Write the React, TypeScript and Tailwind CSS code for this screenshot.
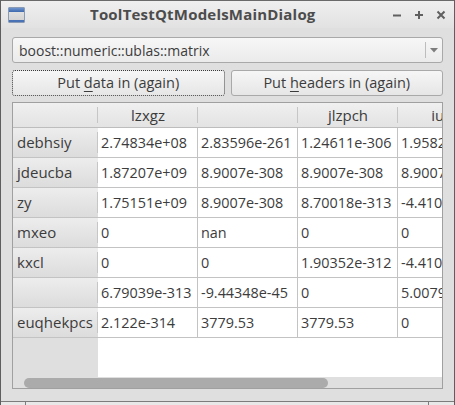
const font = { fontFamily: '"Open Sans", "Noto Sans", sans-serif' };

const columns = ["lzxgz", "", "jlzpch", "iuvjq"];

const rows: { head: string; cells: string[] }[] = [
  { head: "debhsiy", cells: ["2.74834e+08", "2.83596e-261", "1.24611e-306", "1.95823e-307"] },
  { head: "jdeucba", cells: ["1.87207e+09", "8.9007e-308", "8.9007e-308", "8.9007e-308"] },
  { head: "zy", cells: ["1.75151e+09", "8.9007e-308", "8.70018e-313", "-4.41097e-39"] },
  { head: "mxeo", cells: ["0", "nan", "0", "0"] },
  { head: "kxcl", cells: ["0", "0", "1.90352e-312", "-4.41097e-39"] },
  { head: "", cells: ["6.79039e-313", "-9.44348e-45", "0", "5.00791e-313"] },
  { head: "euqhekpcs", cells: ["2.122e-314", "3779.53", "3779.53", "0"] },
];

function TitleBar() {
  return (
    <div className="relative flex h-[28px] shrink-0 items-center bg-gradient-to-b from-[#efefef] to-[#e2e2e2] border-t border-[#6a6a6a]">
      <div className="ml-[7px] flex h-[16px] w-[17px] flex-col overflow-hidden rounded-[1px] border border-[#8a9cb5] bg-gradient-to-b from-[#e8e8e8] to-[#cfcfcf]">
        <div className="h-[4px] bg-gradient-to-b from-[#6f95cf] to-[#3d68ad]" />
        <div className="flex-1" />
        <div className="h-[2px] bg-[#4a73b5]" />
      </div>
      <div className="absolute left-[89px] top-[2px] text-[15px] font-bold tracking-[0.2px] text-[#4c4c4c]">
        ToolTestQtModelsMainDialog
      </div>
      <div className="ml-auto mr-[8px] flex items-center gap-[12px]">
        <svg width="10" height="10" viewBox="0 0 10 10">
          <path d="M1 5.5H9" stroke="#606060" strokeWidth="2" />
        </svg>
        <svg width="10" height="10" viewBox="0 0 10 10">
          <path d="M1 5H9M5 1V9" stroke="#606060" strokeWidth="2" />
        </svg>
        <svg width="10" height="10" viewBox="0 0 10 10">
          <path d="M1.5 1.5L8.5 8.5M8.5 1.5L1.5 8.5" stroke="#606060" strokeWidth="2" />
        </svg>
      </div>
    </div>
  );
}

function ComboBox() {
  return (
    <div className="flex h-[26px] items-center rounded-[3px] border border-[#a9a9a9] bg-gradient-to-b from-[#f7f7f7] to-[#ebebeb] pl-[6px] text-[14px] text-[#3c3c3c]">
      <span className="flex-1">boost::numeric::ublas::matrix</span>
      <div className="h-[16px] w-px bg-[#bdbdbd]" />
      <div className="flex w-[16px] justify-center">
        <svg width="8" height="5" viewBox="0 0 8 5">
          <path d="M0 0H8L4 4.5Z" fill="#7d7d7d" />
        </svg>
      </div>
    </div>
  );
}

function Button({ before, key_, after, focus }: { before: string; key_: string; after: string; focus?: boolean }) {
  return (
    <div
      className={
        "flex h-[26px] items-center justify-center rounded-[3px] bg-gradient-to-b from-[#f6f6f6] to-[#e6e6e6] text-[14.5px] text-[#3c3c3c] " +
        (focus ? "border border-dotted border-[#3a3a3a]" : "border border-[#a9a9a9]")
      }
    >
      <span className="whitespace-pre">
        {before}
        <span className="underline decoration-1 underline-offset-[3px]">{key_}</span>
        {after}
      </span>
    </div>
  );
}

function HeaderSep() {
  return <div className="absolute right-0 top-[4px] bottom-[4px] w-px bg-[#c6c6c6]" />;
}

function Table() {
  return (
    <div className="flex h-[287px] flex-col overflow-hidden border border-[#a0a0a0] bg-[#dfdfdf] text-[15px] text-[#3c3c3c]">
      <div className="flex h-[25px] shrink-0 border-b border-[#bdbdbd] bg-gradient-to-b from-[#f0f0f0] to-[#e3e3e3]">
        <div className="relative w-[85px] shrink-0">
          <HeaderSep />
        </div>
        {columns.map((c, i) => (
          <div key={i} className="relative flex w-[100px] shrink-0 items-center justify-center">
            {c}
            <HeaderSep />
          </div>
        ))}
      </div>
      {rows.map((r, i) => (
        <div key={i} className="flex h-[30px] shrink-0 border-b border-[#c3c3c3]">
          <div className="relative flex w-[85px] shrink-0 items-center bg-gradient-to-b from-[#ededed] to-[#dcdcdc] pl-[4px]">
            {r.head}
            <HeaderSep />
          </div>
          {r.cells.map((c, j) => (
            <div
              key={j}
              className="flex w-[100px] shrink-0 items-center overflow-hidden whitespace-nowrap border-r border-[#c3c3c3] bg-white pl-[3px] text-[14.4px]"
            >
              {c}
            </div>
          ))}
        </div>
      ))}
      <div className="flex flex-1">
        <div className="w-[85px] shrink-0" />
        <div className="flex-1 bg-white" />
      </div>
      <div className="flex h-[11px] shrink-0 items-center bg-[#dfdfdf] pl-[11px]">
        <div className="h-[10px] w-[304px] rounded-full bg-[#ababab]" />
      </div>
    </div>
  );
}

export default function App() {
  return (
    <div className="flex h-[405px] w-[455px] flex-col overflow-hidden border-x border-[#5e5e5e] bg-[#dfdfdf]" style={font}>
      <TitleBar />
      <div className="flex flex-1 flex-col px-[11px] pt-[9px]">
        <ComboBox />
        <div className="mt-[7px] grid grid-cols-2 gap-[6px]">
          <Button before="Put " key_="d" after="ata in (again)" focus />
          <Button before="Put " key_="h" after="eaders in (again)" />
        </div>
        <div className="mt-[6px]">
          <Table />
        </div>
      </div>
      <div className="flex h-[4px] shrink-0 border-t border-[#7c7c7c] bg-[#e8e8e8]">
        <div className="w-[25px] border-r border-[#7c7c7c]" />
        <div className="w-[403px] border-r border-[#7c7c7c]" />
      </div>
    </div>
  );
}
